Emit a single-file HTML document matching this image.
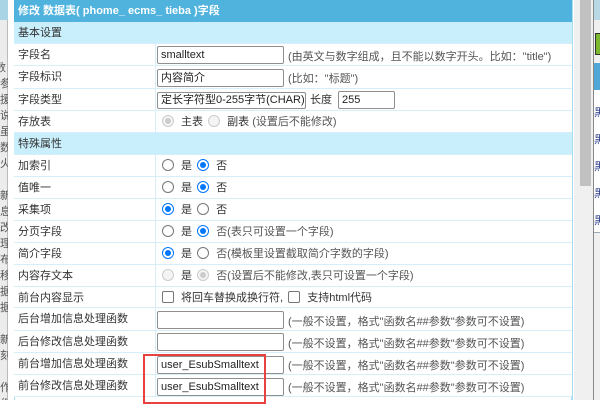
<!DOCTYPE html>
<html><head><meta charset="utf-8"><style>
*{margin:0;padding:0;box-sizing:border-box}
body{width:600px;height:400px;overflow:hidden;background:#fff;font-family:"Liberation Sans","Noto Sans CJK SC",sans-serif;font-size:11px;color:#333;position:relative}
.a{position:absolute}
.row{position:absolute;left:14px;width:558px;border-bottom:1px solid #d6eef8;background:#fff}
.row .l{position:absolute;left:4px;top:0;line-height:22px;white-space:nowrap}
.row .v{position:absolute;left:141px;top:0;height:100%;border-left:1px solid #d6eef8;padding-left:4px;line-height:22px;white-space:nowrap;width:417px}
.sec{background:#c9effc}
.inp{position:absolute;left:143px;width:127px;height:18px;border:1px solid #8f8f8f;border-radius:2px;background:#fff;padding-left:3px;line-height:16px;color:#222}
.note{position:absolute;left:274px;color:#555;white-space:nowrap}
.rd{display:inline-block;width:12px;height:12px;border:1px solid #767676;border-radius:50%;vertical-align:-2px;margin:0 4px 0 2px;background:#fff;position:relative}
.rd.on{border:1px solid #0075ff}
.rd.on:after{content:"";position:absolute;left:2px;top:2px;width:6px;height:6px;border-radius:50%;background:#0075ff}
.rd.dis{border-color:#ccc;background:#f4f4f4}
.rd.dis.on{border-color:#ccc}
.rd.dis.on:after{background:#ccc}
.cb{display:inline-block;width:12px;height:12px;border:1px solid #767676;border-radius:2px;vertical-align:-2px;margin:0 4px 0 2px}
.g{color:#555}
</style></head><body>
<div class="a" style="left:0;top:0;width:8px;height:400px;background:#ececec;border-right:1px solid #bbb"></div>
<div class="a" style="left:0;top:0;width:8px;height:20px;background:#a9d4e6"></div>
<div class="a" style="left:0;top:60px;width:8px;font-size:11px;line-height:16px;color:#555;overflow:hidden;height:340px;text-indent:-5px">数<br>参<br>援<br>说<br>虽<br>数<br>火<br><br>新<br>息<br>改<br>理<br>布<br>移<br>据<br>据<br><br>新<br>刻<br><br>作<br>作</div>
<div class="a" style="left:14px;top:0;width:559px;height:400px;border-right:2px solid #a8dcf2;border-left:1px solid #a8dcf2"></div>
<div class="row" style="top:0;height:22px;background:#4fb3dd;color:#fff;font-weight:bold;border:none"><div class="l" style="line-height:22px">修改 数据表( phome_ ecms_ tieba )字段</div></div>
<div class="row sec" style="top:22px;height:22px"><div class="l">基本设置</div></div>
<div class="row" style="top:44px;height:22px"><div class="l">字段名</div><div class="v"></div><div class="inp" style="top:2px">smalltext</div><div class="note" style="top:4px">(由英文与数字组成，且不能以数字开头。比如："title")</div></div>
<div class="row" style="top:66px;height:23px"><div class="l">字段标识</div><div class="v"></div><div class="inp" style="top:3px">内容简介</div><div class="note" style="top:4px">(比如："标题")</div></div>
<div class="row" style="top:89px;height:22px"><div class="l">字段类型</div><div class="v"></div>
<div class="a" style="left:143px;top:3px;width:149px;height:17px;border:1px solid #8f8f8f;border-radius:2px;padding-left:3px;line-height:15px;color:#222;white-space:nowrap;overflow:hidden">定长字符型0-255字节(CHAR) <span style="font-size:10px">&#x2304;</span></div>
<div class="a" style="left:296px;top:3px;line-height:16px">长度</div>
<div class="inp" style="left:324px;top:2px;width:57px">255</div></div>
<div class="row" style="top:111px;height:22px"><div class="l">存放表</div><div class="v"><span class="rd dis on"></span> 主表 <span class="rd dis"></span> 副表 <span class="g">(设置后不能修改)</span></div></div>
<div class="row sec" style="top:133px;height:22px"><div class="l">特殊属性</div></div>
<div class="row" style="top:155px;height:22px"><div class="l">加索引</div><div class="v"><span class="rd"></span> 是 <span class="rd on"></span> 否</div></div>
<div class="row" style="top:177px;height:22px"><div class="l">值唯一</div><div class="v"><span class="rd"></span> 是 <span class="rd on"></span> 否</div></div>
<div class="row" style="top:199px;height:22px"><div class="l">采集项</div><div class="v"><span class="rd on"></span> 是 <span class="rd"></span> 否</div></div>
<div class="row" style="top:221px;height:22px"><div class="l">分页字段</div><div class="v"><span class="rd"></span> 是 <span class="rd on"></span> <span class="g">否(表只可设置一个字段)</span></div></div>
<div class="row" style="top:243px;height:22px"><div class="l">简介字段</div><div class="v"><span class="rd on"></span> 是 <span class="rd"></span> <span class="g">否(模板里设置截取简介字数的字段)</span></div></div>
<div class="row" style="top:265px;height:22px"><div class="l">内容存文本</div><div class="v"><span class="rd dis"></span> 是 <span class="rd dis on"></span> <span class="g">否(设置后不能修改,表只可设置一个字段)</span></div></div>
<div class="row" style="top:287px;height:21px"><div class="l">前台内容显示</div><div class="v"><span class="cb"></span> 将回车替换成换行符, <span class="cb"></span> 支持html代码</div></div>
<div class="row" style="top:308px;height:23px"><div class="l">后台增加信息处理函数</div><div class="v"></div><div class="inp" style="top:3px"></div><div class="note" style="top:5px">(一般不设置，格式"函数名##参数"参数可不设置)</div></div>
<div class="row" style="top:331px;height:22px"><div class="l">后台修改信息处理函数</div><div class="v"></div><div class="inp" style="top:2px"></div><div class="note" style="top:4px">(一般不设置，格式"函数名##参数"参数可不设置)</div></div>
<div class="row" style="top:353px;height:22px"><div class="l">前台增加信息处理函数</div><div class="v"></div><div class="inp" style="top:3px">user_EsubSmalltext</div><div class="note" style="top:4px">(一般不设置，格式"函数名##参数"参数可不设置)</div></div>
<div class="row" style="top:375px;height:22px"><div class="l">前台修改信息处理函数</div><div class="v"></div><div class="inp" style="top:3px">user_EsubSmalltext</div><div class="note" style="top:4px">(一般不设置，格式"函数名##参数"参数可不设置)</div></div>
<div class="a" style="left:143px;top:354px;width:123px;height:50px;border:2px solid #e8413f"></div>
<div class="a" style="left:574px;top:0;width:19px;height:400px;background:#f0f0f0"></div>
<div class="a" style="left:580px;top:0;width:11px;height:186px;background:#c1c1c1"></div>
<div class="a" style="left:593px;top:0;width:7px;height:400px;background:#f0f0f0;border-left:1px solid #888"></div>
<div class="a" style="left:594px;top:0;width:6px;height:20px;background:#b8d8e6"></div>
<div class="a" style="left:595px;top:33px;width:5px;height:22px;background:#7cb82f;border:1px solid #333;border-right:none"></div>
<div class="a" style="left:594px;top:63px;width:6px;height:27px;background:#4fa8d8"></div>
<div class="a" style="left:594px;top:90px;width:6px;height:143px;background:#fff;border-bottom:1px solid #9ab"></div>
<div class="a" style="left:594px;top:100px;width:6px;font-size:11px;line-height:27px;color:#2a3a8a;overflow:hidden;height:135px">黑<br>黑<br>黑<br>黑<br>黑</div>
</body></html>
